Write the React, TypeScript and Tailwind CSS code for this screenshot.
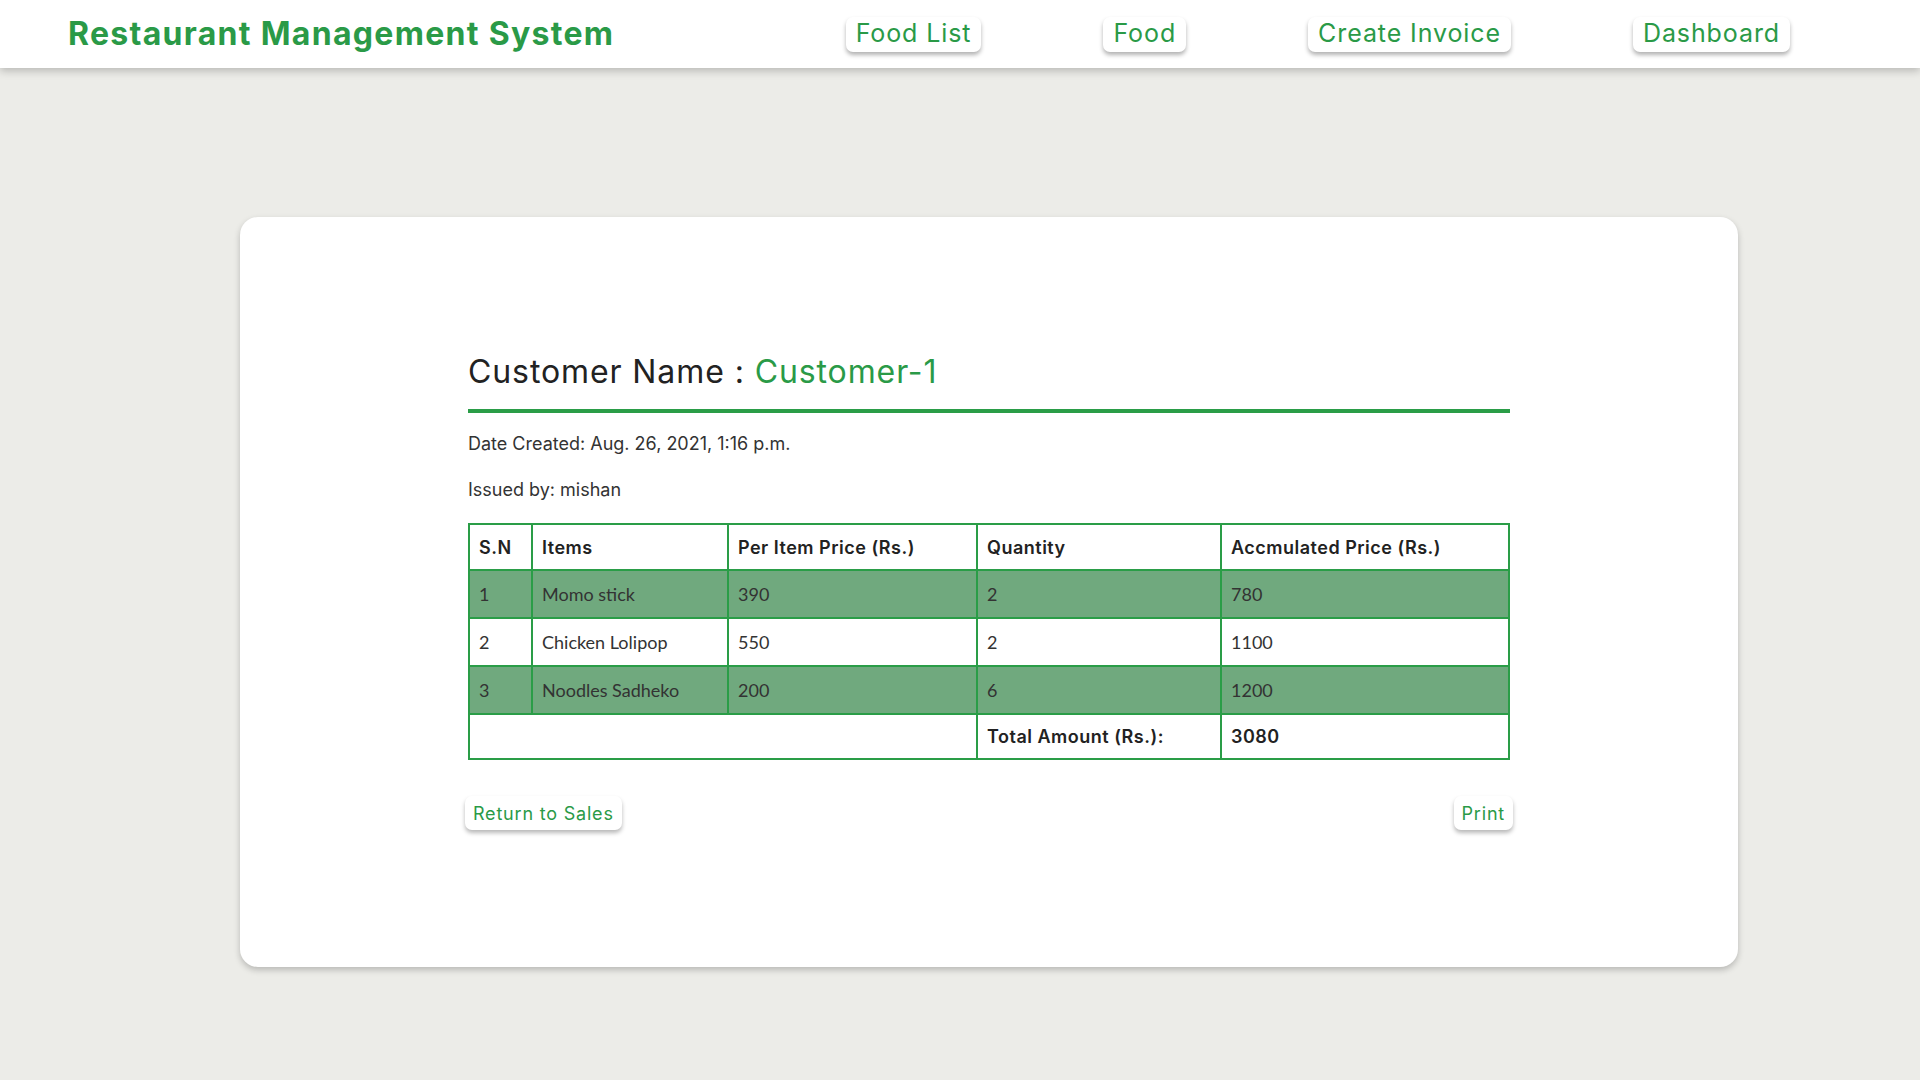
const green = "text-[#2a9a47]";

const navLinks = ["Food List", "Food", "Create Invoice", "Dashboard"];

const rows = [
    { sn: 1, item: "Momo stick", price: 390, qty: 2, total: 780 },
    { sn: 2, item: "Chicken Lolipop", price: 550, qty: 2, total: 1100 },
    { sn: 3, item: "Noodles Sadheko", price: 200, qty: 6, total: 1200 },
];

const heading = { fontFamily: "Inter, 'Open Sans', sans-serif" };
const body = { fontFamily: "Lato, 'Open Sans', sans-serif" };

const cell = "border-2 border-[#2a9d47] px-[9px]";
const headCell = "border-2 border-[#2a9d47] px-[9px] text-[18px] font-semibold tracking-[0.5px] text-[#222]";

export default function App() {
    return (
        <div className="min-h-screen bg-[#ecece8]" style={heading}>
            <header className="relative z-10 h-[68px] bg-white shadow-[0_3px_8px_rgba(0,0,0,0.22)] flex items-center justify-between pl-[68px] pr-[130px]">
                <h1 className={`text-[32px] font-bold ${green} tracking-[1.3px]`}>Restaurant Management System</h1>
                <nav className="flex items-center gap-[122px]">
                    {navLinks.map(link => (
                        <a
                            key={link}
                            className={`h-[35px] px-[10px] flex items-center rounded-[7px] bg-white text-[25px] tracking-[0.9px] ${green} shadow-[0_3px_4px_rgba(0,0,0,0.3)]`}
                        >
                            {link}
                        </a>
                    ))}
                </nav>
            </header>

            <main className="pt-[149px] pb-[113px]">
                <div className="ml-[240px] w-[1498px] rounded-[18px] bg-white shadow-[0_3px_6px_rgba(0,0,0,0.22)] pt-[135px] pb-[137px]">
                    <div className="w-[1042px] mx-auto">
                        <h2 className="text-[32px] leading-[40px] tracking-[0.9px] text-[#222] pb-[17px] border-b-4 border-[#2a9d47]">
                            Customer Name : <span className={green}>Customer-1</span>
                        </h2>
                        <p className="mt-[19px] text-[18px] leading-[24px] text-[#333]">Date Created: Aug. 26, 2021, 1:16 p.m.</p>
                        <p className="mt-[22px] text-[18px] leading-[24px] text-[#333]">Issued by: mishan</p>

                        <table className="mt-[21px] w-full border-collapse border-2 border-[#2a9d47] text-left">
                            <colgroup>
                                <col className="w-[63px]" />
                                <col className="w-[196px]" />
                                <col className="w-[249px]" />
                                <col className="w-[244px]" />
                                <col />
                            </colgroup>
                            <thead>
                                <tr className="h-[46px]">
                                    {["S.N", "Items", "Per Item Price (Rs.)", "Quantity", "Accmulated Price (Rs.)"].map(h => (
                                        <th key={h} className={headCell}>
                                            {h}
                                        </th>
                                    ))}
                                </tr>
                            </thead>
                            <tbody style={body} className="text-[18px] text-[#333]">
                                {rows.map(r => (
                                    <tr key={r.sn} className={r.sn % 2 === 1 ? "h-[48px] bg-[#70a97e]" : "h-[48px] bg-white"}>
                                        <td className={cell}>{r.sn}</td>
                                        <td className={cell}>{r.item}</td>
                                        <td className={cell}>{r.price}</td>
                                        <td className={cell}>{r.qty}</td>
                                        <td className={cell}>{r.total}</td>
                                    </tr>
                                ))}
                                <tr className="h-[45px]">
                                    <td colSpan={3} className={cell}></td>
                                    <td style={heading} className={headCell}>Total Amount (Rs.):</td>
                                    <td style={heading} className={headCell}>3080</td>
                                </tr>
                            </tbody>
                        </table>

                        <div className="mt-[36px] flex justify-between -mx-[3px]">
                            <button className={`h-[34px] px-[8px] rounded-[7px] bg-white text-[18px] tracking-[0.8px] ${green} shadow-[0_3px_4px_rgba(0,0,0,0.28)]`}>
                                Return to Sales
                            </button>
                            <button className={`h-[34px] px-[8px] rounded-[7px] bg-white text-[18px] tracking-[0.8px] ${green} shadow-[0_3px_4px_rgba(0,0,0,0.28)]`}>
                                Print
                            </button>
                        </div>
                    </div>
                </div>
            </main>
        </div>
    );
}
